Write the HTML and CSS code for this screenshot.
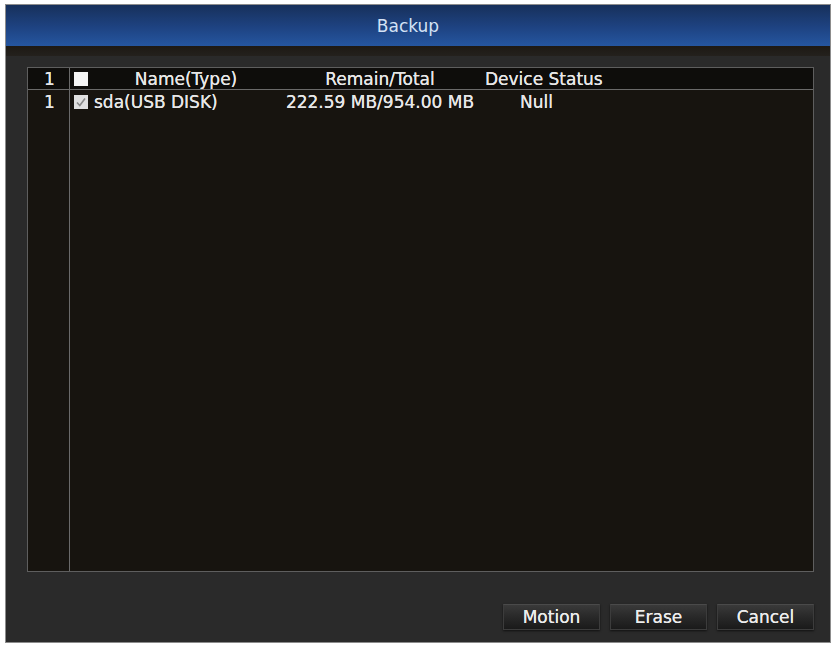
FILE: index.html
```html
<!DOCTYPE html>
<html>
<head>
<meta charset="utf-8">
<link rel="stylesheet" href="styles.css">
</head>
<body>
<div class="window">
  <div class="titlebar">Backup</div>
  <div class="band"></div>
  <div class="content">
    <div class="table">
      <div class="idx head">1</div>
      <div class="main head">
        <span class="cb"><svg width="14" height="14" viewBox="0 0 14 14"><rect x="0" y="0" width="14" height="14" fill="#f4f4f4"/></svg></span>
        <span class="c-name c-center">Name(Type)</span>
        <span class="c-rem c-center">Remain/Total</span>
        <span class="c-stat c-head-stat">Device Status</span>
      </div>
      <div class="idx row">1</div>
      <div class="main row">
        <span class="cb"><svg width="14" height="14" viewBox="0 0 14 14"><rect x="0" y="0" width="14" height="14" fill="#e0e0e0"/><path d="M3 7.5 L5.8 10.5 L11 3.5" fill="none" stroke="#8a8a8a" stroke-width="1.6"/></svg></span>
        <span class="c-name c-left">sda(USB DISK)</span>
        <span class="c-rem c-center">222.59 MB/954.00 MB</span>
        <span class="c-stat c-row-stat">Null</span>
      </div>
      <div class="idx fill"></div>
      <div class="main fill"></div>
    </div>
    <div class="buttons">
      <button class="btn">Motion</button>
      <button class="btn">Erase</button>
      <button class="btn">Cancel</button>
    </div>
  </div>
</div>
</body>
</html>
```
FILE: styles.css
```css
html, body {
  margin: 0;
  padding: 0;
  background: #ffffff;
}
body {
  font-family: "DejaVu Sans", "Liberation Sans", sans-serif;
  width: 834px;
  height: 645px;
  overflow: hidden;
}
.window {
  margin: 4px 0 0 5px;
  width: 824px;
  height: 637px;
  border: 1px solid #8c8c8c;
  background: #2a2a2a;
  display: flex;
  flex-direction: column;
}
.titlebar {
  height: 40px;
  background: linear-gradient(to bottom, #17305b 0%, #1e4382 55%, #2556a0 100%);
  color: #d4e2f5;
  font-size: 17px;
  display: flex;
  align-items: center;
  justify-content: center;
  padding-right: 20px;
  padding-top: 1px;
}
.band {
  height: 10px;
  background: linear-gradient(to bottom, #1d1914, #24211d);
}
.content {
  flex: 1;
  display: flex;
  flex-direction: column;
  padding: 11px 16px 0 21px;
}
.table {
  height: 503px;
  border: 1px solid #5e5e5e;
  background: #17140f;
  display: grid;
  grid-template-columns: 42px 1fr;
  grid-template-rows: 22px 22px 1fr;
  color: #e6e6e6;
  font-size: 17px;
  text-shadow: 0 0 0.4px #ffffff;
}
.idx {
  border-right: 1px solid #6a6a6a;
  display: flex;
  align-items: center;
  justify-content: center;
  padding-left: 2px;
}
.head {
  background: #0e0d0b;
  border-bottom: 1px solid #6a6a6a;
}
.main {
  display: grid;
  grid-template-columns: 21px 190px 198px 1fr;
  align-items: center;
}
.idx.row, .main.row { padding-top: 1px; }
.main.fill, .idx.fill { display: block; }
.cb {
  display: flex;
  align-items: center;
  padding-left: 4px;
}
.cb svg { display: block; }
.c-center { text-align: center; }
.c-left { padding-left: 3px; }
.c-head-stat { padding-left: 6px; }
.c-row-stat { padding-left: 41px; }
.buttons {
  display: flex;
  justify-content: flex-end;
  gap: 10px;
  margin-top: 32px;
}
.btn {
  width: 97px;
  height: 26px;
  border: 1px solid #3c3c3c;
  border-top-color: #4a4a4a;
  background: linear-gradient(to bottom, #3a3a3a 0%, #2a2a2a 45%, #1a1a1a 100%);
  color: #ececec;
  font-family: "DejaVu Sans", "Liberation Sans", sans-serif;
  font-size: 17px;
  text-shadow: 0 0 0.6px #ffffff;
  padding: 0;
  box-shadow: 0 1px 2px rgba(0,0,0,0.6);
}
```
